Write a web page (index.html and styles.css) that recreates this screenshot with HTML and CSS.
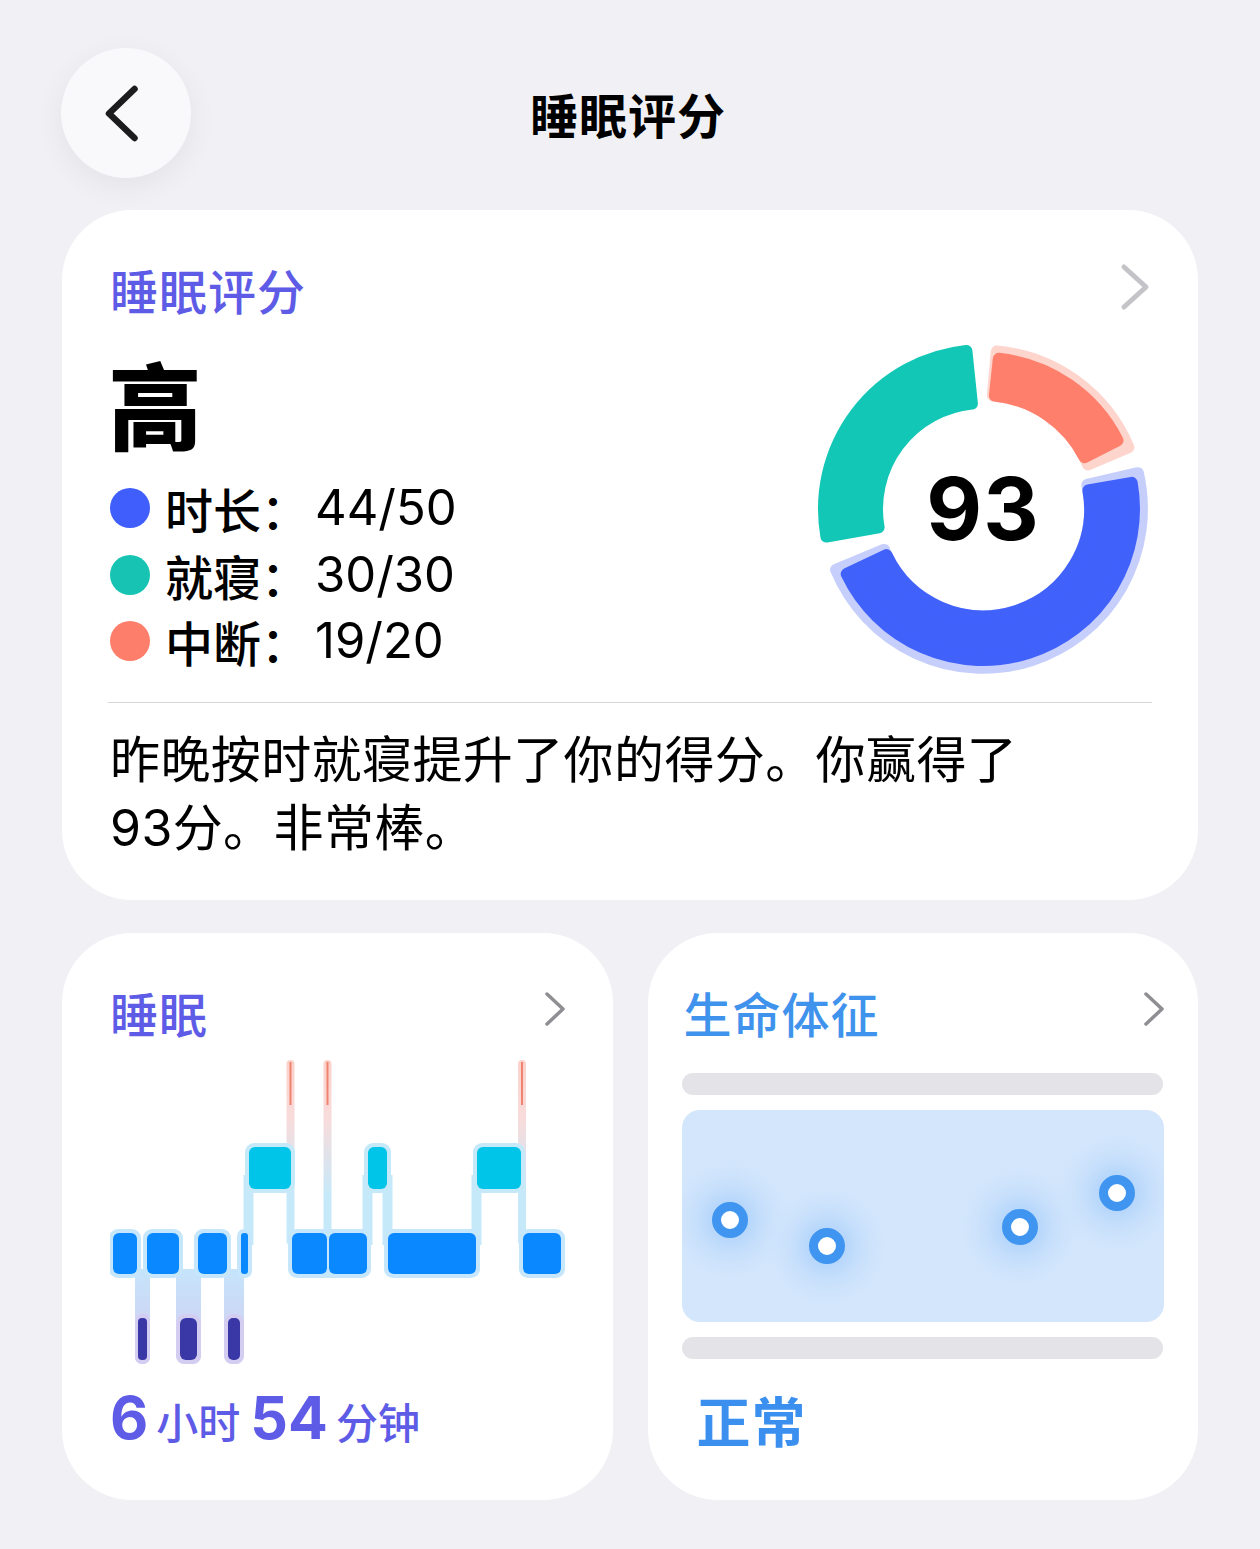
FILE: index.html
```html
<!DOCTYPE html>
<html lang="zh-CN">
<head>
<meta charset="utf-8">
<title>睡眠评分</title>
<link rel="stylesheet" href="styles.css">
</head>
<body>
<div class="page">
  <header class="topbar">
    <button class="back" aria-label="返回">
      <svg width="35" height="57" viewBox="0 0 35 57"><polyline points="30.5,4 5,28.5 30.5,53" fill="none" stroke="#1c1c1e" stroke-width="6.5" stroke-linecap="round" stroke-linejoin="round"/></svg>
    </button>
    <h1 class="title">睡眠评分</h1>
    <div></div>
  </header>

  <section class="card card-main">
    <div class="card-head">
      <h2 class="card-title purple">睡眠评分</h2>
      <svg class="chev-lg" width="30" height="48" viewBox="0 0 30 48"><polyline points="4,4 26,24 4,44" fill="none" stroke="#c4c4c8" stroke-width="5" stroke-linecap="round" stroke-linejoin="round"/></svg>
    </div>
    <div class="score-body">
      <div class="score-left">
        <div class="grade">高</div>
        <div class="legend">
          <div class="row"><span class="dot dot-blue"></span><span class="lbl">时长：</span><span class="val">44/50</span></div>
          <div class="row"><span class="dot dot-teal"></span><span class="lbl">就寝：</span><span class="val">30/30</span></div>
          <div class="row"><span class="dot dot-coral"></span><span class="lbl">中断：</span><span class="val">19/20</span></div>
        </div>
      </div>
      <div class="donut">
        <svg width="350" height="350" viewBox="0 0 350 350">
          <g stroke-width="12" stroke-linejoin="round">
            <path d="M329.9 139.2 A159 159 0 0 1 28.1 235.8 L76.1 215.9 A107 107 0 0 0 279.3 150.9 Z" fill="#c6cffb" stroke="#c6cffb"/>
            <path d="M188.8 17.6 A158 158 0 0 1 320.4 113.3 L279.9 130.5 A114 114 0 0 0 184.9 61.4 Z" fill="#fdd5cd" stroke="#fdd5cd"/>
            <path d="M323.7 148.8 A151 151 0 0 1 38.7 240 L78.4 221.1 A107 107 0 0 0 280.4 156.4 Z" fill="#4161fb" stroke="#4161fb"/>
            <path d="M18.4 202.6 A159 159 0 0 1 158.4 16.9 L163.9 69.6 A106 106 0 0 0 70.6 193.4 Z" fill="#12c7b5" stroke="#12c7b5"/>
            <path d="M190.8 24.8 A151 151 0 0 1 309.5 106.4 L276.6 123.2 A114 114 0 0 0 186.9 61.6 Z" fill="#fe806c" stroke="#fe806c"/>
          </g>
        </svg>
        <div class="donut-num">93</div>
      </div>
    </div>
    <div class="divider"></div>
    <p class="summary">昨晚按时就寝提升了你的得分。你赢得了93分。非常棒。</p>
  </section>

  <div class="grid">
    <section class="card card-sleep">
      <div class="card-head">
        <h2 class="card-title purple">睡眠</h2>
        <svg class="chev-sm" width="22" height="36" viewBox="0 0 22 36"><polyline points="3,3 19,18 3,33" fill="none" stroke="#8e8e93" stroke-width="3.5" stroke-linecap="round" stroke-linejoin="round"/></svg>
      </div>
      <svg class="hypno" width="455" height="310" viewBox="0 0 455 310">
        <defs>
          <linearGradient id="gAw" gradientUnits="userSpaceOnUse" x1="0" y1="5" x2="0" y2="140">
            <stop offset="0" stop-color="#fbd2ca"/>
            <stop offset="0.45" stop-color="#f8dcdc"/>
            <stop offset="1" stop-color="#c6e9fa"/>
          </linearGradient>
          <linearGradient id="gDeep" gradientUnits="userSpaceOnUse" x1="0" y1="215" x2="0" y2="300">
            <stop offset="0" stop-color="#c5e4fa"/>
            <stop offset="1" stop-color="#d3cdf1"/>
          </linearGradient>
        </defs>
        <g class="pale">
          <rect x="133.5" y="120" width="10" height="70" fill="#c6e9fa"/>
          <rect x="252.5" y="120" width="10" height="70" fill="#c6e9fa"/>
          <rect x="272.5" y="120" width="10" height="70" fill="#c6e9fa"/>
          <rect x="361.5" y="120" width="10" height="70" fill="#c6e9fa"/>
          <rect x="176.5" y="5" width="8" height="185" rx="4" fill="url(#gAw)"/>
          <rect x="213.5" y="5" width="8" height="185" rx="4" fill="url(#gAw)"/>
          <rect x="408" y="5" width="8" height="185" rx="4" fill="url(#gAw)"/>
          <rect x="25" y="214" width="15" height="95" rx="7" fill="url(#gDeep)"/>
          <rect x="66" y="214" width="25" height="95" rx="8" fill="url(#gDeep)"/>
          <rect x="114" y="214" width="20" height="95" rx="8" fill="url(#gDeep)"/>
          <!-- halos core -->
          <rect x="-1" y="174" width="32" height="49" rx="9" fill="#c6e7fb"/>
          <rect x="33" y="174" width="40" height="49" rx="9" fill="#c6e7fb"/>
          <rect x="84" y="174" width="37" height="49" rx="9" fill="#c6e7fb"/>
          <rect x="127" y="174" width="15" height="49" rx="7" fill="#c6e7fb"/>
          <rect x="178" y="174" width="83" height="49" rx="9" fill="#c6e7fb"/>
          <rect x="274" y="174" width="96" height="49" rx="9" fill="#c6e7fb"/>
          <rect x="409" y="174" width="46" height="49" rx="9" fill="#c6e7fb"/>
          <!-- halos rem -->
          <rect x="135" y="88" width="50" height="50" rx="9" fill="#c6e9fa"/>
          <rect x="254" y="88" width="27" height="50" rx="9" fill="#c6e9fa"/>
          <rect x="363" y="88" width="52" height="50" rx="9" fill="#c6e9fa"/>
          <!-- halos deep -->
          <rect x="25" y="259" width="15" height="50" rx="7" fill="#d3cdf1"/>
          <rect x="66" y="259" width="25" height="50" rx="9" fill="#d3cdf1"/>
          <rect x="114" y="259" width="20" height="50" rx="9" fill="#d3cdf1"/>
        </g>
        <g fill="#0a88ff">
          <rect x="3" y="178" width="24" height="41" rx="6"/>
          <rect x="37" y="178" width="32" height="41" rx="6"/>
          <rect x="88" y="178" width="29" height="41" rx="6"/>
          <rect x="131" y="178" width="7" height="41" rx="3"/>
          <rect x="182" y="178" width="35" height="41" rx="6"/>
          <rect x="219" y="178" width="38" height="41" rx="6"/>
          <rect x="278" y="178" width="88" height="41" rx="6"/>
          <rect x="413" y="178" width="38" height="41" rx="6"/>
        </g>
        <g fill="#00c4e8">
          <rect x="139" y="92" width="42" height="42" rx="6"/>
          <rect x="258" y="92" width="19" height="42" rx="6"/>
          <rect x="367" y="92" width="44" height="42" rx="6"/>
        </g>
        <g fill="#3a37a6">
          <rect x="28" y="263" width="9" height="42" rx="4"/>
          <rect x="70" y="263" width="17" height="42" rx="6"/>
          <rect x="118" y="263" width="12" height="42" rx="5"/>
        </g>
        <g fill="#f0836f">
          <rect x="179.5" y="7" width="2" height="43"/>
          <rect x="216.5" y="7" width="2" height="43"/>
          <rect x="411" y="7" width="2" height="43"/>
        </g>
      </svg>
      <div class="duration purple"><span class="num">6</span><span class="unit">小时</span><span class="num">54</span><span class="unit">分钟</span></div>
    </section>

    <section class="card card-vitals">
      <div class="card-head vitals-head">
        <h2 class="card-title blue">生命体征</h2>
        <svg class="chev-sm" width="22" height="36" viewBox="0 0 22 36"><polyline points="3,3 19,18 3,33" fill="none" stroke="#8e8e93" stroke-width="3.5" stroke-linecap="round" stroke-linejoin="round"/></svg>
      </div>
      <div class="bar"></div>
      <svg class="panel" width="482" height="212" viewBox="0 0 482 212">
        <defs>
          <radialGradient id="glow">
            <stop offset="0" stop-color="#9cc8fa" stop-opacity="1"/>
            <stop offset="0.45" stop-color="#b7d7fb" stop-opacity="0.6"/>
            <stop offset="1" stop-color="#d3e6fc" stop-opacity="0"/>
          </radialGradient>
          <clipPath id="pclip"><rect x="0" y="0" width="482" height="212" rx="18"/></clipPath>
        </defs>
        <rect x="0" y="0" width="482" height="212" rx="18" fill="#d3e6fc"/>
        <g clip-path="url(#pclip)">
          <circle cx="48" cy="110" r="66" fill="url(#glow)"/>
          <circle cx="145" cy="136" r="66" fill="url(#glow)"/>
          <circle cx="338" cy="117" r="66" fill="url(#glow)"/>
          <circle cx="435" cy="83" r="66" fill="url(#glow)"/>
        </g>
        <g fill="#fff" stroke="#3f95ef" stroke-width="9">
          <circle cx="48" cy="110" r="13.5"/>
          <circle cx="145" cy="136" r="13.5"/>
          <circle cx="338" cy="117" r="13.5"/>
          <circle cx="435" cy="83" r="13.5"/>
        </g>
      </svg>
      <div class="bar bar2"></div>
      <div class="status">正常</div>
    </section>
  </div>
</div>
</body>
</html>
```

FILE: styles.css
```css
* { box-sizing: border-box; }
html, body { margin: 0; padding: 0; }
body {
  background: #f0f0f5;
  font-family: "Noto Sans CJK SC", "Noto Sans", sans-serif;
  color: #000;
  width: 1260px;
  height: 1549px;
  overflow: hidden;
}
.page { padding: 48px 62px 0 62px; }

.topbar {
  display: grid;
  grid-template-columns: 130px 1fr 130px;
  align-items: center;
  height: 130px;
}
.back {
  width: 130px;
  height: 130px;
  border-radius: 50%;
  border: none;
  background: #f9f9fc;
  box-shadow: 0 8px 30px rgba(0, 0, 0, 0.06);
  display: flex;
  align-items: center;
  justify-content: center;
  padding: 0 10px 0 0;
  margin-left: -1px;
}
.back svg { display: block; }
.title {
  margin: 0;
  text-align: center;
  font-size: 48px;
  font-weight: 700;
  line-height: 58px;
  letter-spacing: 1px;
  padding-right: 4px;
}

.card {
  background: #fff;
  border-radius: 70px;
}
.card-main {
  margin-top: 32px;
  padding: 50px 50px 38px 48px;
}
.card-head {
  display: flex;
  align-items: center;
  justify-content: space-between;
  height: 58px;
}
.card-title {
  margin: 0;
  font-size: 48px;
  line-height: 58px;
  font-weight: 500;
  letter-spacing: 1px;
}
.purple { color: #5e5ce6; }
.blue { color: #3f93ec; }
.chev-lg { display: block; margin-right: -2px; margin-top: -4px; }
.chev-sm { display: block; margin-top: -6px; }

.score-body {
  display: flex;
  align-items: flex-start;
}
.score-left { flex: 1; }
.grade {
  margin-top: 35px;
  font-size: 94px;
  line-height: 98px;
  font-weight: 900;
  margin-left: -2px;
}
.legend { margin-top: 24px; }
.row {
  display: flex;
  align-items: center;
  height: 66.5px;
}
.dot {
  width: 40px;
  height: 40px;
  border-radius: 50%;
  margin-right: 15px;
  flex: none;
}
.dot-blue { background: #3f5efb; }
.dot-teal { background: #17c4b3; }
.dot-coral { background: #fd7e6a; }
.lbl {
  font-size: 48px;
  font-weight: 500;
  line-height: 58px;
}
.val {
  font-family: Inter, "Noto Sans", sans-serif;
  font-size: 49px;
  font-weight: 400;
  line-height: 58px;
  margin-left: 6px;
}
.donut {
  position: relative;
  width: 350px;
  height: 350px;
  margin-top: 16px;
  margin-right: -10px;
  flex: none;
}
.donut svg { display: block; }
.donut-num {
  position: absolute;
  left: 0;
  right: 0;
  top: 0;
  bottom: 0;
  display: flex;
  align-items: center;
  justify-content: center;
  font-family: Inter, "Noto Sans", sans-serif;
  font-size: 86px;
  font-weight: 700;
  letter-spacing: 1px;
}
.divider {
  height: 1px;
  background: #d6d6da;
  margin: 18px -4px 0 -2px;
}
.summary {
  margin: 23px 0 0 0;
  max-width: 960px;
  font-size: 50px;
  line-height: 68px;
  font-weight: 400;
  font-family: Inter, "Noto Sans CJK SC", sans-serif;
  letter-spacing: 0.4px;
}

.grid {
  display: grid;
  grid-template-columns: minmax(0, 1fr) minmax(0, 1fr);
  gap: 35px;
  margin-top: 33px;
}
.card-sleep, .card-vitals { height: 567px; }
.card-sleep { padding: 50px 47px 0 48px; }
.hypno { display: block; margin-top: 14px; }
.duration {
  margin-top: 17px;
  line-height: 72px;
  height: 72px;
  white-space: nowrap;
}
.duration .num {
  font-family: Inter, "Noto Sans", sans-serif;
  font-size: 59px;
  font-weight: 700;
}
.duration .unit {
  font-size: 42px;
  font-weight: 500;
  margin: 0 10px 0 8px;
}

.card-vitals { padding: 50px 35px 0 34px; }
.vitals-head { margin-left: 2px; margin-right: -2px; }
.bar {
  height: 22px;
  border-radius: 11px;
  background: #e3e3e8;
  margin-top: 32px;
}
.bar2 { margin-top: 15px; }
.panel { display: block; margin-top: 15px; }
.status {
  margin: 29px 0 0 15px;
  font-size: 54px;
  line-height: 64px;
  font-weight: 700;
  color: #3b8fee;
  letter-spacing: 1px;
}
```
